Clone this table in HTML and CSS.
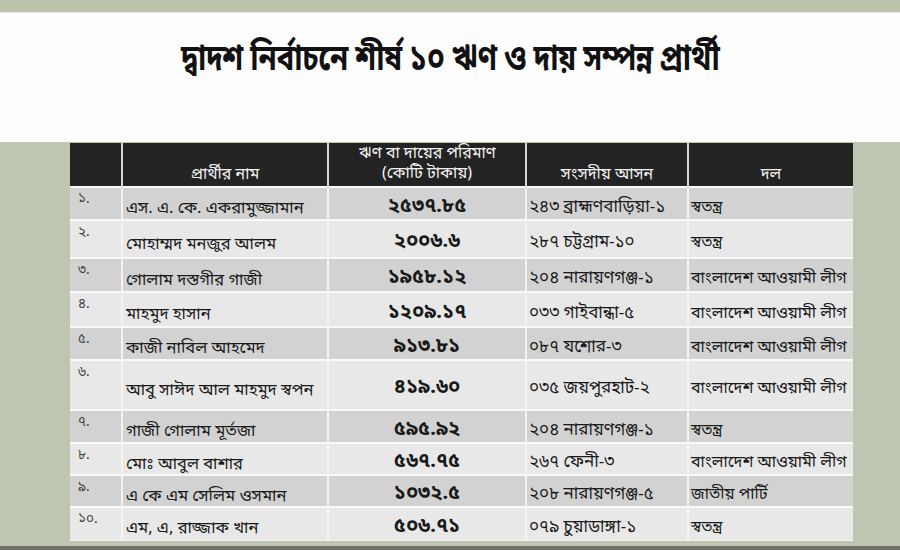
FILE: index.html
```html
<!DOCTYPE html>
<html lang="bn">
<head>
<meta charset="utf-8">
<link rel="stylesheet" href="styles.css">
</head>
<body>
<div class="topband"></div>
<header class="banner">
  <h1 class="title">দ্বাদশ নির্বাচনে শীর্ষ ১০ ঋণ ও দায় সম্পন্ন প্রার্থী</h1>
</header>
<main class="stage">
  <table class="debt">
    <colgroup>
      <col class="c-sl"><col class="c-name"><col class="c-amt"><col class="c-seat"><col class="c-party">
    </colgroup>
    <thead>
      <tr>
        <th></th>
        <th class="bottom">প্রার্থীর নাম</th>
        <th class="top">ঋণ বা দায়ের পরিমাণ<br>(কোটি টাকায়)</th>
        <th class="bottom">সংসদীয় আসন</th>
        <th class="bottom">দল</th>
      </tr>
    </thead>
    <tbody>
      <tr><td class="sl">১.</td><td class="name">এস. এ. কে. একরামুজ্জামান</td><td class="amt">২৫৩৭.৮৫</td><td class="seat">২৪৩ ব্রাহ্মণবাড়িয়া-১</td><td class="party">স্বতন্ত্র</td></tr>
      <tr><td class="sl">২.</td><td class="name">মোহাম্মদ মনজুর আলম</td><td class="amt">২০০৬.৬</td><td class="seat">২৮৭ চট্টগ্রাম-১০</td><td class="party">স্বতন্ত্র</td></tr>
      <tr><td class="sl">৩.</td><td class="name">গোলাম দস্তগীর গাজী</td><td class="amt">১৯৫৮.১২</td><td class="seat">২০৪ নারায়ণগঞ্জ-১</td><td class="party">বাংলাদেশ আওয়ামী লীগ</td></tr>
      <tr><td class="sl">৪.</td><td class="name">মাহমুদ হাসান</td><td class="amt">১২০৯.১৭</td><td class="seat">০৩৩ গাইবান্ধা-৫</td><td class="party">বাংলাদেশ আওয়ামী লীগ</td></tr>
      <tr><td class="sl">৫.</td><td class="name">কাজী নাবিল আহমেদ</td><td class="amt">৯১৩.৮১</td><td class="seat">০৮৭ যশোর-৩</td><td class="party">বাংলাদেশ আওয়ামী লীগ</td></tr>
      <tr><td class="sl">৬.</td><td class="name">আবু সাঈদ আল মাহমুদ স্বপন</td><td class="amt">৪১৯.৬০</td><td class="seat">০৩৫ জয়পুরহাট-২</td><td class="party">বাংলাদেশ আওয়ামী লীগ</td></tr>
      <tr><td class="sl">৭.</td><td class="name">গাজী গোলাম মূর্তজা</td><td class="amt">৫৯৫.৯২</td><td class="seat">২০৪ নারায়ণগঞ্জ-১</td><td class="party">স্বতন্ত্র</td></tr>
      <tr><td class="sl">৮.</td><td class="name">মোঃ আবুল বাশার</td><td class="amt">৫৬৭.৭৫</td><td class="seat">২৬৭ ফেনী-৩</td><td class="party">বাংলাদেশ আওয়ামী লীগ</td></tr>
      <tr><td class="sl">৯.</td><td class="name">এ কে এম সেলিম ওসমান</td><td class="amt">১০৩২.৫</td><td class="seat">২০৮ নারায়ণগঞ্জ-৫</td><td class="party">জাতীয় পার্টি</td></tr>
      <tr><td class="sl">১০.</td><td class="name">এম, এ, রাজ্জাক খান</td><td class="amt">৫০৬.৭১</td><td class="seat">০৭৯ চুয়াডাঙ্গা-১</td><td class="party">স্বতন্ত্র</td></tr>
    </tbody>
  </table>
  <div class="bottomedge"></div>
</main>
</body>
</html>
```

FILE: styles.css
```css
* { box-sizing: border-box; }
html, body { margin: 0; padding: 0; }
body {
  width: 900px;
  height: 550px;
  overflow: hidden;
  background: #bec5b0;
  font-family: "Noto Sans Bengali", "Noto Serif Bengali", "Lohit Bengali", "FreeSans", "Noto Sans", sans-serif;
  color: #1a1a1a;
}
.topband {
  height: 13px;
  background: #bcc3ad;
  border-bottom: 1px solid #e6ebe2;
}
.banner {
  height: 129px;
  background: #fdfdfd;
  display: flex;
  justify-content: center;
  padding-top: 26px;
}
.title {
  margin: 0;
  font-size: 36px;
  font-weight: 700;
  color: #111;
  letter-spacing: -0.5px;
  transform: scaleX(0.82);
  line-height: 44px;
  white-space: nowrap;
}
.stage {
  height: 408px;
  display: flex;
  flex-direction: column;
  align-items: flex-start;
  padding-left: 70px;
  position: relative;
}
.debt {
  width: 783px;
  border-collapse: collapse;
  table-layout: fixed;
  margin-top: 1px;
  border-bottom: 1px solid #f4f4f4;
}
.c-sl { width: 52px; }
.c-name { width: 206px; }
.c-amt { width: 198px; }
.c-seat { width: 162px; }
.c-party { width: 165px; }
.debt th {
  background: #232323;
  color: #f2f2f2;
  font-weight: 400;
  font-size: 16px;
  height: 44px;
  padding: 0 2px;
  text-align: center;
  border-left: 2px solid #d6d6d6;
  line-height: 20px;
  white-space: nowrap;
}
.debt th:first-child { border-left: none; }
.debt th.bottom { vertical-align: bottom; padding-bottom: 1px; }
.debt th.top { vertical-align: top; padding-top: 1px; }
.debt td {
  border-top: 2px solid #fafafa;
  border-left: 2px solid #f4f4f4;
  font-size: 16px;
  line-height: 18px;
  padding: 0 3px;
  vertical-align: middle;
  white-space: nowrap;
  overflow: hidden;
}
.debt td:first-child { border-left: none; }
.debt tbody tr:nth-child(odd) td { background: #d2d2d2; }
.debt tbody tr:nth-child(even) td { background: #e8e8e8; }
.debt tbody tr { height: 33px; }
.debt tbody tr:nth-child(2) { height: 38px; }
.debt tbody tr:nth-child(3) { height: 34px; }
.debt tbody tr:nth-child(4) { height: 35px; }
.debt tbody tr:nth-child(6) { height: 50px; }
.debt tbody tr:nth-child(8),
.debt tbody tr:nth-child(9) { height: 32px; }
.debt td.sl {
  vertical-align: top;
  padding: 3px 0 0 8px;
  font-size: 13.5px;
  color: #444;
}
.debt td.name { padding-top: 11px; padding-left: 3px; font-size: 16.5px; }
.debt td.amt {
  text-align: center;
  font-weight: 700;
  font-size: 20px;
  padding-top: 6px;
}
.debt td.seat { padding-top: 8px; padding-left: 2px; font-size: 17px; }
.debt td.party { padding-top: 8px; padding-left: 2px; font-size: 16px; }
.bottomedge {
  position: absolute;
  left: 0;
  right: 0;
  bottom: 0;
  height: 4px;
  background: #6f736c;
}
```
